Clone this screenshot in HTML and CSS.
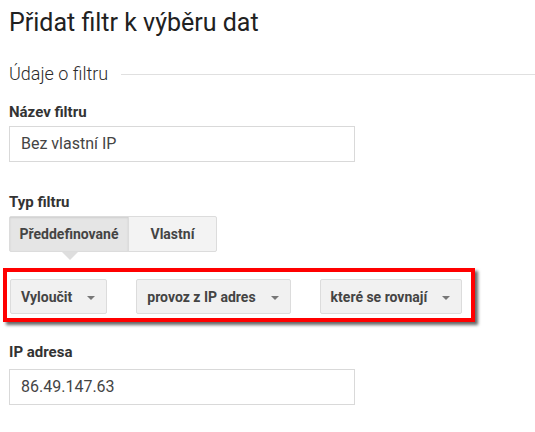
FILE: index.html
```html
<!DOCTYPE html>
<html lang="cs">

<head>
    <meta charset="UTF-8">
    <meta name="viewport" content="width=device-width, initial-scale=1.0">
    <title>Přidat filtr</title>
    <link rel="stylesheet" href="styles.css">
</head>

<body>

    <div class="page">
        <h1 class="title">Přidat filtr k výběru dat</h1>

        <div class="section-head">
            <span>Údaje o filtru</span>
            <div class="section-line"></div>
        </div>

        <div class="label label-first">Název filtru</div>
        <div class="field">Bez vlastní IP</div>

        <div class="label label-type">Typ filtru</div>
        <div class="toggle">
            <div class="toggle-btn toggle-active">Předdefinované</div>
            <div class="toggle-btn">Vlastní</div>
        </div>

        <!-- highlighted row -->
        <div class="highlight">
            <div class="select">Vyloučit <span class="caret"></span></div>
            <div class="select">provoz z IP adres <span class="caret"></span></div>
            <div class="select">které se rovnají <span class="caret"></span></div>
        </div>

        <div class="label label-ip">IP adresa</div>
        <div class="field field-ip">86.49.147.63</div>
    </div>

</body>

</html>
```

FILE: styles.css
```css
body {
    margin: 0;
    padding: 0;
    font-family: Roboto, "Noto Sans", sans-serif;
    background: #ffffff;
    color: #333333;
}

.page {
    padding: 9px 0 0 9px;
}

.title {
    margin: 0;
    font-size: 25px;
    line-height: 28px;
    font-weight: 400;
    color: #212121;
}

.section-head {
    display: flex;
    align-items: center;
    margin-top: 26px;
    font-size: 18px;
    line-height: 22px;
    font-weight: 300;
    color: #2b2b2b;
}

.section-line {
    flex: 1;
    height: 1px;
    margin-left: 13px;
    background: #e0e0e0;
}

.label {
    font-size: 15px;
    line-height: 18px;
    font-weight: 700;
    color: #333333;
}

.label-first {
    margin-top: 18px;
}

.label-type {
    margin-top: 31px;
}

.label-ip {
    margin-top: 21px;
}

.field {
    box-sizing: border-box;
    width: 346px;
    height: 36px;
    margin-top: 5px;
    padding: 0 11px;
    border: 1px solid #d9d9d9;
    font-size: 16px;
    line-height: 34px;
    color: #444444;
}

.field-ip {
    margin-top: 8px;
}

.toggle {
    position: relative;
    display: flex;
    width: 208px;
    height: 36px;
    margin-top: 5px;
    box-sizing: border-box;
    border: 1px solid #dcdcdc;
    border-radius: 2px;
    background: #f3f3f3;
}

.toggle-btn {
    display: flex;
    align-items: center;
    justify-content: center;
    font-size: 14px;
    font-weight: 700;
    color: #444444;
}

.toggle-active {
    position: relative;
    width: 118px;
    background: #e5e5e5;
    border-right: 1px solid #dcdcdc;
    box-shadow: inset 0 1px 2px rgba(0, 0, 0, 0.1);
}

.toggle-btn + .toggle-btn {
    flex: 1;
}

.toggle-active::after {
    content: "";
    position: absolute;
    left: 52px;
    bottom: -9px;
    border-left: 8px solid transparent;
    border-right: 8px solid transparent;
    border-top: 8px solid #dedede;
}

.highlight {
    box-sizing: border-box;
    display: flex;
    gap: 29px;
    width: 472px;
    margin: 16px 0 0 -6px;
    padding: 7px 0 4px 3px;
    border: 4px solid #ff0000;
    box-shadow: 3px 3px 3px rgba(0, 0, 0, 0.6);
}

.select {
    display: flex;
    align-items: center;
    height: 35px;
    box-sizing: border-box;
    padding: 0 11px 0 10px;
    border: 1px solid #dcdcdc;
    border-radius: 2px;
    background: #f1f1f1;
    font-size: 14px;
    font-weight: 700;
    color: #444444;
}

.caret {
    width: 0;
    height: 0;
    margin-left: 15px;
    margin-top: 2px;
    border-left: 4px solid transparent;
    border-right: 4px solid transparent;
    border-top: 4px solid #777777;
}
```
